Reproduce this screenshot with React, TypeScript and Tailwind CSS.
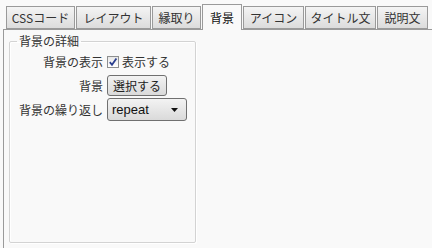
const tabs = [
  { label: 'CSSコード', w: 'w-[69px]' },
  { label: 'レイアウト', w: 'w-[75px]' },
  { label: '縁取り', w: 'w-[49px]' },
  { label: '背景', w: 'w-[40px]', active: true },
  { label: 'アイコン', w: 'w-[61px]' },
  { label: 'タイトル文', w: 'w-[71px]' },
  { label: '説明文', w: 'w-[51px]' },
]

function Tab({ label, w, active }: { label: string; w: string; active?: boolean }) {
  if (active) {
    return (
      <div
        className={`${w} h-[26px] -mb-px flex items-center justify-center border border-b-0 border-[#9a9a9a] bg-[#f9f9f9] text-[12px] text-[#111] relative z-10 whitespace-nowrap`}
      >
        {label}
      </div>
    )
  }
  return (
    <div
      className={`${w} h-[23px] flex items-center justify-center border border-[#9a9a9a] bg-gradient-to-b from-[#f4f4f4] to-[#dcdcdc] text-[12px] text-[#333] whitespace-nowrap`}
    >
      {label}
    </div>
  )
}

function Checkbox() {
  return (
    <span className="w-[12px] h-[12px] border border-[#8e8f8f] bg-gradient-to-b from-[#e8e8e8] to-white flex items-center justify-center">
      <svg width="10" height="10" viewBox="0 0 10 10">
        <path d="M1.8 5.2 L4 7.8 L8.4 1.6" fill="none" stroke="#2b3f8f" strokeWidth="1.8" />
      </svg>
    </span>
  )
}

export default function App() {
  return (
    <div
      className="w-[432px] h-[248px] bg-[#f9f9f9] overflow-hidden"
      style={{ fontFamily: '"Noto Sans CJK JP", "Liberation Sans", sans-serif' }}
    >
      <div className="flex items-end gap-px pl-[6px] pt-[3px] h-[29px]">
        {tabs.map((t) => (
          <Tab key={t.label} {...t} />
        ))}
      </div>
      <div className="ml-[3px] h-[219px] border-l border-t border-[#9a9a9a] pl-[5px] pt-[4px]">
        <fieldset className="w-[185px] h-[209px] border border-[#d3d3d3] rounded-[2px] shadow-[inset_1px_1px_0_#fff,1px_1px_0_#fff] px-[8px] pt-0">
          <legend className="px-[2px] ml-[-1px] text-[12px] leading-[14px] text-[#333]">背景の詳細</legend>
          <div className="grid grid-cols-[85px_auto] justify-start gap-x-[4px] text-[12px] text-[#333] mt-[6px] whitespace-nowrap">
            <div className="text-right leading-[16px] self-center">背景の表示</div>
            <div className="flex items-center gap-[3px] h-[16px]">
              <Checkbox />
              <span>表示する</span>
            </div>
            <div className="text-right self-center mt-[5px]">背景</div>
            <div className="mt-[5px]">
              <button className="h-[21px] px-[5px] border border-[#707070] rounded-[3px] bg-gradient-to-b from-[#f3f3f3] to-[#dadada] text-[12px] leading-none text-[#222]">
                選択する
              </button>
            </div>
            <div className="text-right self-center mt-[2px]">背景の繰り返し</div>
            <div className="mt-[2px]">
              <div className="w-[80px] h-[23px] flex items-center justify-between pl-[4px] pr-[8px] border border-[#707070] rounded-[3px] bg-gradient-to-b from-[#f3f3f3] to-[#dadada] text-[13px] text-[#111]">
                <span style={{ fontFamily: '"Liberation Sans", sans-serif' }}>repeat</span>
                <svg width="7" height="4" viewBox="0 0 7 4">
                  <path d="M0 0 H7 L3.5 4 Z" fill="#111" />
                </svg>
              </div>
            </div>
          </div>
        </fieldset>
      </div>
    </div>
  )
}
